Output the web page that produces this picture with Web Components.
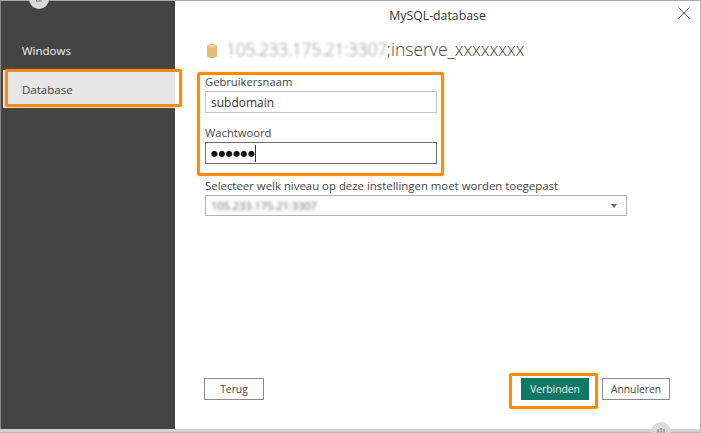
<!DOCTYPE html>
<html>
<head>
<meta charset="utf-8">
<style>
  html, body { margin: 0; padding: 0; background: #fff; }
  body { width: 701px; height: 433px; overflow: hidden; font-family: "Open Sans", "Noto Sans", sans-serif; }
</style>
</head>
<body>
<login-dialog>
  <nav-item slot="nav">Windows</nav-item>
  <nav-item slot="nav" selected>Database</nav-item>

  <span slot="title">MySQL-database</span>
  <span slot="server">105.233.175.21:3307</span>
  <span slot="db">;inserve_xxxxxxxx</span>

  <form-field slot="fields" label="Gebruikersnaam" value="subdomain"></form-field>
  <form-field slot="fields" label="Wachtwoord" value="●●●●●●" focused></form-field>
  <level-select slot="level" label="Selecteer welk niveau op deze instellingen moet worden toegepast" value="105.233.175.21:3307"></level-select>

  <dlg-button slot="back">Terug</dlg-button>
  <dlg-button slot="ok" primary>Verbinden</dlg-button>
  <dlg-button slot="ok">Annuleren</dlg-button>
</login-dialog>

<script>
class LoginDialog extends HTMLElement {
  constructor() {
    super()
    this._root = this.attachShadow({ mode: 'open' });
    this._root.innerHTML = `
      <style>
        :host { display: block; width: 701px; height: 433px; position: relative; overflow: hidden; background: #fff; }
        .win { width: 701px; height: 433px; box-sizing: border-box; display: flex; flex-direction: column;
          border-top: 1px solid #aaa; border-right: 1px solid #b5b5b5; }
        .body { flex: 1; display: flex; min-height: 0; }
        .bottom { height: 4px; background: #d2d2d2; border-bottom: 1px solid #b5b5b5; box-sizing: border-box; }
        .side { width: 175px; box-sizing: border-box; background: #444; padding: 31px 0 0 2px; border-left: 1px solid #888; }
        .main { flex: 1; display: flex; flex-direction: column; padding: 0 30px 29px 29px; position: relative; }
        .title { text-align: center; font-size: 12.3px; line-height: 16px; color: #333; padding-top: 7px; margin-left: -29px; margin-right: -30px; }
        .head { display: flex; align-items: center; gap: 9px; margin: 13px 0 0 3px; height: 24px; font-size: 17.5px; font-weight: 300; color: #444; white-space: nowrap; }
        .head svg { flex: none; margin-top: 3px; }
        .server { filter: blur(1.5px); color: #7f8c9a; letter-spacing: -0.3px; }
        .fields { margin-top: 13px; margin-left: 1px; display: flex; flex-direction: column; gap: 12px; }
        .level { margin-top: 14px; margin-left: 1px; }
        .foot { margin-top: auto; display: flex; justify-content: space-between; align-items: flex-start; }
        .ok { display: flex; gap: 13px; }
        .close { position: absolute; top: 6px; right: 10px; width: 12px; height: 12px; }
        .badge { position: absolute; border-radius: 50%; background: #d9d9d9; width: 20px; height: 20px; }
        .badge.back { left: 29px; top: -11px; }
        .badge.back svg { position: absolute; left: 6px; top: 9px; }
        .badge.help { left: 651px; top: 422px; }
        .badge.help svg { position: absolute; left: 6px; top: 6px; }
        .mark { position: absolute; box-sizing: border-box; border: 3px solid #ff8c00; border-radius: 2px; box-shadow: 0 0 3px rgba(255,140,0,.35); pointer-events: none; }
      </style>
      <div class="win">
        <div class="body">
          <div class="side"><slot name="nav"></slot></div>
          <div class="main">
            <div class="title"><slot name="title"></slot></div>
            <svg class="close" viewBox="0 0 12 12"><path d="M.5.5l11 11M11.5.5l-11 11" stroke="#555" stroke-width="1" fill="none"/></svg>
            <div class="head">
              <svg width="10" height="14" viewBox="0 0 10 14"><path d="M0 2.2C0 .9 2.2 0 5 0s5 .9 5 2.2v9.6C10 13.1 7.8 14 5 14s-5-.9-5-2.2z" fill="#e3bb74"/><ellipse cx="5" cy="2.2" rx="4" ry="1.2" fill="#efd5a4"/></svg>
              <span><span class="server"><slot name="server"></slot></span><slot name="db"></slot></span>
            </div>
            <div class="fields"><slot name="fields"></slot></div>
            <div class="level"><slot name="level"></slot></div>
            <div class="foot">
              <slot name="back"></slot>
              <div class="ok"><slot name="ok"></slot></div>
            </div>
          </div>
        </div>
        <div class="bottom"></div>
      </div>
      <div class="badge back"><svg width="8" height="4" viewBox="0 0 8 4"><path d="M4 0L1 3h6" stroke="#777" fill="none"/></svg></div>
      <div class="badge help"><svg width="8" height="6" viewBox="0 0 8 6"><path d="M1 1v4M4 0v5M7 1v4" stroke="#666" fill="none"/></svg></div>
      <div class="mark" style="left:5px;top:69px;width:177px;height:38px"></div>
      <div class="mark" style="left:197px;top:72px;width:247px;height:104px"></div>
      <div class="mark" style="left:509px;top:373px;width:89px;height:36px"></div>
    `;
  }
}

class NavItem extends HTMLElement {
  constructor() {
    super()
    this._root = this.attachShadow({ mode: 'open' });
    this._root.innerHTML = `
      <style>
        :host { display: block; height: 38px; line-height: 38px; padding-left: 19px; font-size: 11.5px; color: #f2f2f2; }
        :host([selected]) { background: #e6e6e6; color: #444; line-height: 40px; }
      </style>
      <slot></slot>
    `;
  }
}

class FormField extends HTMLElement {
  constructor() {
    super()
    this._root = this.attachShadow({ mode: 'open' });
    const focused = this.hasAttribute('focused');
    this._root.innerHTML = `
      <style>
        :host { display: block; font-size: 11.2px; color: #444; }
        .label { line-height: 16px; height: 17px; }
        .box { width: 232px; height: 22px; box-sizing: border-box; border: 1px solid ${focused ? '#6e6e6e' : '#c4c4c4'};
          padding-left: 5px; display: flex; align-items: center; font-size: 12px; color: #333; }
        .dots { font-size: 8px; letter-spacing: 0.4px; color: #111; font-family: "DejaVu Sans", sans-serif; }
        .caret { width: 1px; height: 17px; background: #333; margin-left: 0; }
      </style>
      <div class="label">${this.getAttribute('label')}</div>
      <div class="box">${focused
        ? `<span class="dots">${this.getAttribute('value')}</span><span class="caret"></span>`
        : this.getAttribute('value')}</div>
    `;
  }
}

class LevelSelect extends HTMLElement {
  constructor() {
    super()
    this._root = this.attachShadow({ mode: 'open' });
    this._root.innerHTML = `
      <style>
        :host { display: block; font-size: 11.4px; color: #444; }
        .label { line-height: 16px; height: 16px; white-space: nowrap; }
        .box { width: 422px; height: 21px; margin-top: 1px; box-sizing: border-box; border: 1px solid #b4b4b4; padding: 0 9px 0 5px;
          display: flex; align-items: center; justify-content: space-between; }
        .val { filter: blur(1.4px); font-size: 11px; color: #5b6673; }
        .arrow { width: 0; height: 0; border: 3px solid transparent; border-top: 4px solid #666; border-bottom: 0; }
      </style>
      <div class="label">${this.getAttribute('label')}</div>
      <div class="box"><span class="val">${this.getAttribute('value')}</span><span class="arrow"></span></div>
    `;
  }
}

class DlgButton extends HTMLElement {
  constructor() {
    super()
    this._root = this.attachShadow({ mode: 'open' });
    this._root.innerHTML = `
      <style>
        :host { display: inline-flex; align-items: center; justify-content: center; box-sizing: border-box;
          width: 60px; height: 22px; border: 1px solid #8a8a8a; background: #fff; font-size: 10.3px; color: #444; }
        :host([slot="ok"]) { width: 68px; }
        :host([primary]) { background: #117865; border-color: #117865; color: #e8f3f0; }
      </style>
      <slot></slot>
    `;
  }
}

customElements.define('nav-item', NavItem);
customElements.define('form-field', FormField);
customElements.define('level-select', LevelSelect);
customElements.define('dlg-button', DlgButton);
customElements.define('login-dialog', LoginDialog);
</script>
</body>
</html>
